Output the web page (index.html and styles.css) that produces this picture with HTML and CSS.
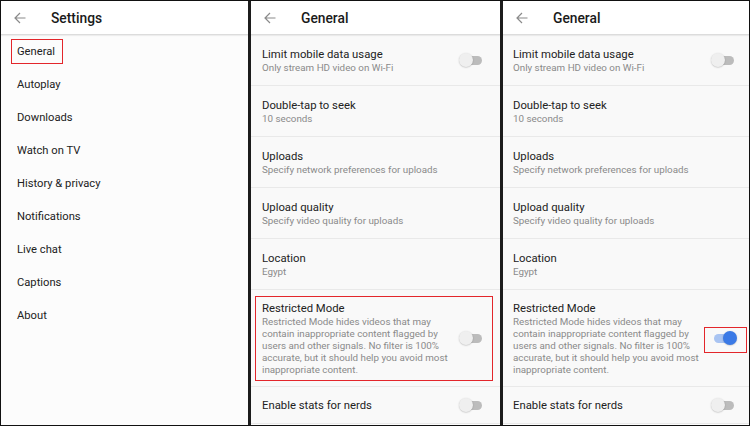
FILE: index.html
```html
<!DOCTYPE html>
<html>
<head>
<meta charset="utf-8">
<link rel="stylesheet" href="styles.css">
</head>
<body>
<div class="frame">
  <section class="panel">
    <header class="bar">
      <svg class="back" viewBox="0 0 12 12" width="12" height="12"><path d="M11.5 6H1M6 1L1 6l5 5" fill="none" stroke="#8a8a8a" stroke-width="1.2"/></svg>
      <h1>Settings</h1>
    </header>
    <ul class="menu">
      <li><span class="hl">General</span></li>
      <li>Autoplay</li>
      <li>Downloads</li>
      <li>Watch on TV</li>
      <li>History &amp; privacy</li>
      <li>Notifications</li>
      <li>Live chat</li>
      <li>Captions</li>
      <li>About</li>
    </ul>
  </section>

  <section class="panel">
    <header class="bar">
      <svg class="back" viewBox="0 0 12 12" width="12" height="12"><path d="M11.5 6H1M6 1L1 6l5 5" fill="none" stroke="#8a8a8a" stroke-width="1.2"/></svg>
      <h1>General</h1>
    </header>
    <div class="list">
      <div class="row"><div class="txt"><div class="t">Limit mobile data usage</div><div class="s">Only stream HD video on Wi-Fi</div></div><span class="tg"></span></div>
      <div class="row"><div class="txt"><div class="t">Double-tap to seek</div><div class="s">10 seconds</div></div></div>
      <div class="row"><div class="txt"><div class="t">Uploads</div><div class="s">Specify network preferences for uploads</div></div></div>
      <div class="row"><div class="txt"><div class="t">Upload quality</div><div class="s">Specify video quality for uploads</div></div></div>
      <div class="row"><div class="txt"><div class="t">Location</div><div class="s">Egypt</div></div></div>
      <div class="row tall"><div class="box"><div class="txt"><div class="t">Restricted Mode</div><div class="s">Restricted Mode hides videos that may<br>contain inappropriate content flagged by<br>users and other signals. No filter is 100%<br>accurate, but it should help you avoid most<br>inappropriate content.</div></div><span class="tg"></span></div></div>
      <div class="row short"><div class="txt"><div class="t">Enable stats for nerds</div></div><span class="tg"></span></div>
    </div>
  </section>

  <section class="panel">
    <header class="bar">
      <svg class="back" viewBox="0 0 12 12" width="12" height="12"><path d="M11.5 6H1M6 1L1 6l5 5" fill="none" stroke="#8a8a8a" stroke-width="1.2"/></svg>
      <h1>General</h1>
    </header>
    <div class="list narrow">
      <div class="row"><div class="txt"><div class="t">Limit mobile data usage</div><div class="s">Only stream HD video on Wi-Fi</div></div><span class="tg"></span></div>
      <div class="row"><div class="txt"><div class="t">Double-tap to seek</div><div class="s">10 seconds</div></div></div>
      <div class="row"><div class="txt"><div class="t">Uploads</div><div class="s">Specify network preferences for uploads</div></div></div>
      <div class="row"><div class="txt"><div class="t">Upload quality</div><div class="s">Specify video quality for uploads</div></div></div>
      <div class="row"><div class="txt"><div class="t">Location</div><div class="s">Egypt</div></div></div>
      <div class="row tall"><div class="txt"><div class="t">Restricted Mode</div><div class="s">Restricted Mode hides videos that may<br>contain inappropriate content flagged by<br>users and other signals. No filter is 100%<br>accurate, but it should help you avoid most<br>inappropriate content.</div></div><span class="tg on"><i class="mark"></i></span></div>
      <div class="row short"><div class="txt"><div class="t">Enable stats for nerds</div></div><span class="tg"></span></div>
    </div>
  </section>
</div>
</body>
</html>
```

FILE: styles.css
```css
* { box-sizing: border-box; }
html, body { margin: 0; padding: 0; }
body {
  width: 750px;
  height: 426px;
  overflow: hidden;
  font-family: Roboto, "Liberation Sans", sans-serif;
  background: #000;
}
.frame {
  width: 750px;
  height: 426px;
  border: 1px solid #111;
  background: #1c1c1c;
  display: grid;
  grid-template-columns: 247px 249px 246px;
  column-gap: 3px;
}
.panel {
  background: #fcfcfc;
  display: flex;
  flex-direction: column;
  overflow: hidden;
}
.bar {
  height: 34px;
  flex: none;
  background: #fff;
  border-bottom: 1px solid #dcdcdc;
  box-shadow: 0 1px 1px rgba(0,0,0,0.06);
  display: flex;
  align-items: center;
  padding-left: 13px;
  position: relative;
  z-index: 1;
}
.back { flex: none; }
.bar h1 {
  margin: 0 0 0 25px;
  font-size: 13.8px;
  font-weight: 500;
  color: #1a1a1a;
}
.menu {
  list-style: none;
  margin: 0;
  padding: 0;
}
.menu li {
  height: 33px;
  display: flex;
  align-items: center;
  padding-left: 16px;
  font-size: 11.2px;
  color: #222;
}
.hl {
  border: 1px solid #e3262b;
  padding: 5px 7px 5px 5px;
  margin-left: -6px;
}
.list { background: #f9f9f9; }
.row {
  height: 51px;
  border-bottom: 1px solid #e9e9e9;
  display: flex;
  align-items: center;
  justify-content: space-between;
  padding: 0 15px 0 11px;
}
.list.narrow .row { padding: 0 12px 0 10px; }
.row.tall { height: 97px; padding: 0 7px 0 4px; }
.list.narrow .row.tall { padding: 0 12px 0 10px; }
.row.short { height: 37px; }
.box {
  flex: 1;
  height: 85px;
  border: 1px solid #e3262b;
  display: flex;
  align-items: center;
  justify-content: space-between;
  padding: 0 7px 0 6px;
}
.t {
  font-size: 11.3px;
  line-height: 15px;
  color: #222;
}
.s {
  font-size: 9.8px;
  line-height: 12px;
  color: #8a8a8a;
}
.tg {
  flex: none;
  position: relative;
  width: 26px;
  height: 14px;
}
.tg::before {
  content: "";
  position: absolute;
  left: 3px;
  top: 2.5px;
  width: 20px;
  height: 9px;
  border-radius: 5px;
  background: #bcbcbc;
}
.tg::after {
  content: "";
  position: absolute;
  left: 0;
  top: 0;
  width: 14px;
  height: 14px;
  border-radius: 50%;
  background: #efefef;
  box-shadow: 0 0.5px 1.5px rgba(0,0,0,0.25);
}
.tg.on::before { background: #a9c4f2; }
.tg.on::after { left: 12px; background: #3b7ae6; }
.mark {
  position: absolute;
  left: -7px;
  top: -4px;
  width: 43px;
  height: 26px;
  border: 1px solid #e3262b;
}
```
